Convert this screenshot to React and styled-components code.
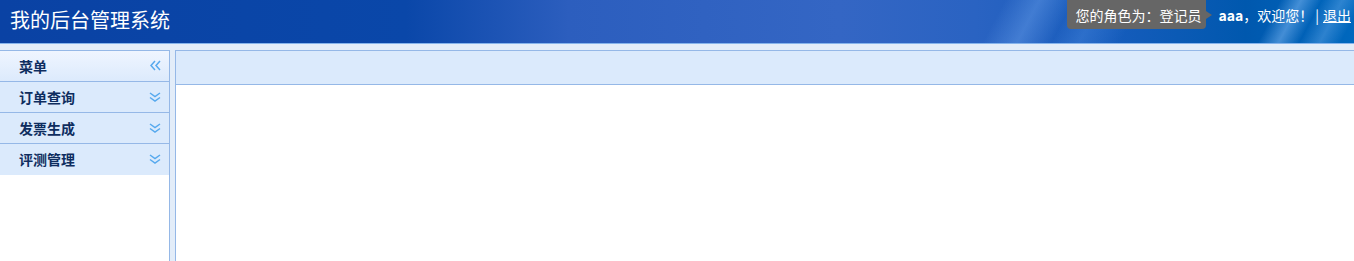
import React from "react";
import styled, { createGlobalStyle } from "styled-components";

const GlobalStyle = createGlobalStyle`
  html, body { margin: 0; padding: 0; height: 100%; }
  body {
    font-family: "Noto Sans CJK SC", "Noto Sans", "Liberation Sans", sans-serif;
    background: #e3edf9;
    overflow: hidden;
  }
`;

const Page = styled.div`
  display: flex;
  flex-direction: column;
  height: 261px;
`;

const Header = styled.header`
  height: 43px;
  flex: none;
  display: flex;
  justify-content: space-between;
  align-items: flex-start;
  border-bottom: 1px solid #86b4ec;
  background:
    linear-gradient(118deg, transparent 0%, transparent 73%, rgba(140, 190, 255, 0.3) 75.5%, transparent 78%, rgba(120, 180, 255, 0.2) 80%, transparent 83%, transparent 100%),
    linear-gradient(118deg, transparent 0%, transparent 93%, rgba(150, 200, 255, 0.45) 94.5%, transparent 96%, rgba(150, 200, 255, 0.3) 97.5%, transparent 99%),
    linear-gradient(90deg, #0a42a4 0%, #0a47a9 30%, #2c5ebe 42%, #3466c4 62%, #2a63c2 72%, #165cbc 82%, #0058ae 92%, #0068be 100%);
`;

const Title = styled.h1`
  margin: 0;
  padding-left: 10px;
  line-height: 40px;
  font-size: 20px;
  font-weight: normal;
  color: #ffffff;
`;

const UserBar = styled.div`
  display: flex;
  align-items: center;
  height: 29px;
  padding-right: 3px;
  font-size: 14px;
  color: #ffffff;
`;

const RoleTip = styled.span`
  position: relative;
  display: flex;
  align-items: center;
  height: 29px;
  padding: 0 5px 0 8px;
  margin-right: 12px;
  background: #666666;
  border-radius: 0 0 4px 4px;
  color: #ffffff;
  &::after {
    content: "";
    position: absolute;
    right: -6px;
    top: 11px;
    border-style: solid;
    border-width: 4px 0 4px 6px;
    border-color: transparent transparent transparent #666666;
  }
`;

const UserName = styled.b`
  font-weight: bold;
`;

const Divider = styled.span`
  margin: 0 4px 0 2px;
`;

const Logout = styled.a`
  color: #ffffff;
  text-decoration: underline;
  cursor: pointer;
`;

const Body = styled.div`
  flex: 1;
  display: flex;
  gap: 5px;
  padding-top: 6px;
  min-height: 0;
`;

const Sidebar = styled.aside`
  width: 169px;
  flex: none;
  background: #ffffff;
  border-top: 1px solid #95b8e7;
  border-right: 1px solid #95b8e7;
  display: flex;
  flex-direction: column;
`;

const SideRow = styled.div`
  flex: none;
  display: flex;
  align-items: center;
  justify-content: space-between;
  padding: 0 8px 1px 19px;
  box-sizing: border-box;
  height: 31px;
  border-bottom: ${(p) => (p.$last ? "none" : "1px solid #95b8e7")};
  background: ${(p) =>
    p.$head ? "linear-gradient(to bottom, #eff5ff 0%, #dceafc 100%)" : "#dbeafc"};
  font-size: 14px;
  font-weight: bold;
  color: #0e2d5f;
`;

const Main = styled.main`
  flex: 1;
  background: #ffffff;
  border-top: 1px solid #95b8e7;
  border-left: 1px solid #95b8e7;
`;

const MainHead = styled.div`
  height: 33px;
  background: #dbeafc;
  border-bottom: 1px solid #95b8e7;
`;

const IconBox = styled.svg`
  display: block;
  flex: none;
`;

const CollapseIcon = () => (
  <IconBox width="11" height="11" viewBox="0 0 11 11" fill="none" stroke="#56a9ee" strokeWidth="1.5">
    <path d="M5 1 L1 5.5 L5 10" />
    <path d="M10 1 L6 5.5 L10 10" />
  </IconBox>
);

const ExpandIcon = () => (
  <IconBox width="12" height="10" viewBox="0 0 12 10" fill="none" stroke="#56a9ee" strokeWidth="1.5">
    <path d="M1 1 L6 4.5 L11 1" />
    <path d="M1 5.5 L6 9 L11 5.5" />
  </IconBox>
);

const menus = ["订单查询", "发票生成", "评测管理"];

export default function App() {
  return (
    <Page>
      <GlobalStyle />
      <Header>
        <Title>我的后台管理系统</Title>
        <UserBar>
          <RoleTip>您的角色为：登记员</RoleTip>
          <UserName>aaa</UserName>
          <span>，欢迎您！</span>
          <Divider>|</Divider>
          <Logout>退出</Logout>
        </UserBar>
      </Header>
      <Body>
        <Sidebar>
          <SideRow $head>
            <span>菜单</span>
            <CollapseIcon />
          </SideRow>
          {menus.map((m, i) => (
            <SideRow key={m} $last={i === menus.length - 1}>
              <span>{m}</span>
              <ExpandIcon />
            </SideRow>
          ))}
        </Sidebar>
        <Main>
          <MainHead />
        </Main>
      </Body>
    </Page>
  );
}
